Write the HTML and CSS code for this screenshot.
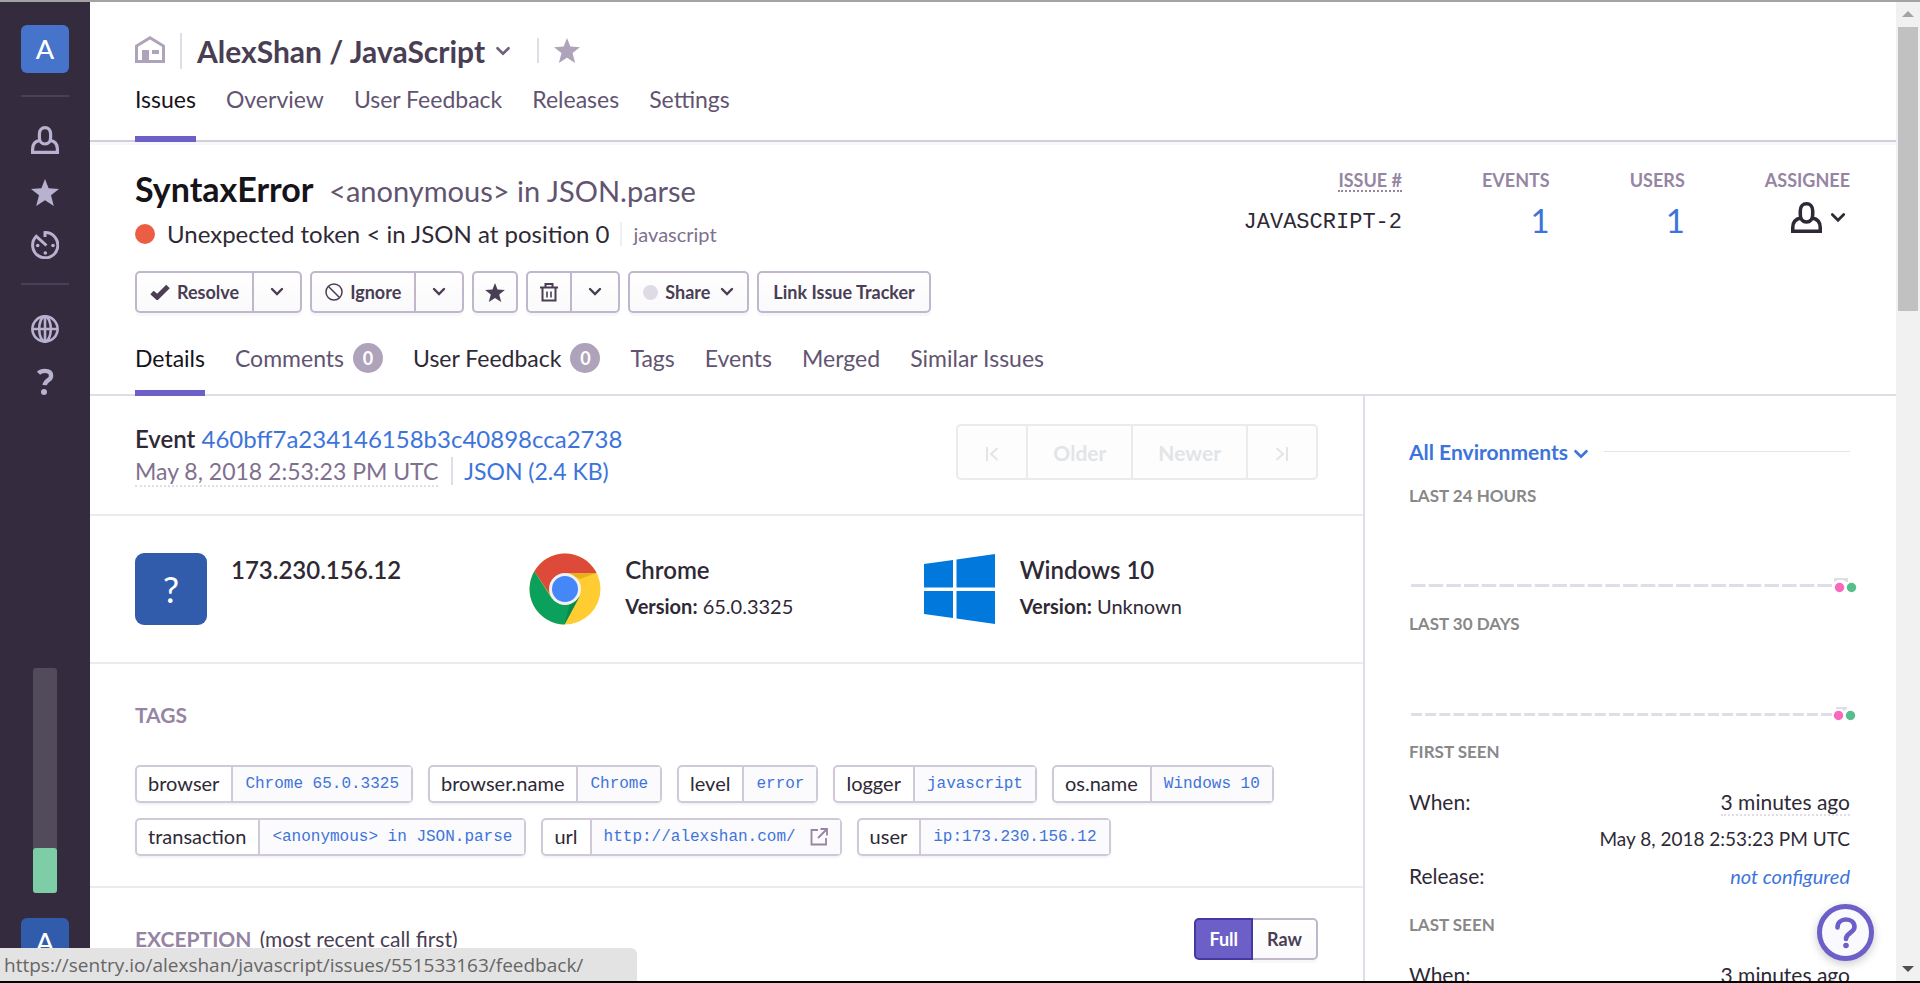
FILE: index.html
```html
<!DOCTYPE html>
<html lang="en">
<head>
<meta charset="utf-8">
<title>SyntaxError - AlexShan / JavaScript</title>
<link rel="stylesheet" href="styles.css">
</head>
<body>
<svg class="sprite" aria-hidden="true">
  <symbol id="chev" viewBox="0 0 14 10"><path d="M2 2l5 5 5-5" fill="none" stroke="currentColor" stroke-width="2.4" stroke-linecap="round"/></symbol>
  <symbol id="star" viewBox="0 0 28 27"><path d="M14 0l3.6 9.2L28 10l-8 6.3L22.8 27 14 21.2 5.2 27 8 16.300 0 10l10.400-.8z" fill="currentColor"/></symbol>
  <symbol id="user" viewBox="0 0 28 28"><path d="M8.400 8c0-4 2.300-6.400 5.600-6.400S19.600 4 19.600 8v3.500c0 4-2.300 6.500-5.600 6.500s-5.600-2.500-5.600-6.500zM8.800 14.400C4 15.300 1.600 18.500 1.600 23v3.400h24.800V23c0-4.500-2.400-7.700-7.200-8.600" fill="none" stroke="currentColor" stroke-width="3.200"/></symbol>
</svg>
<div class="app">
  <nav class="rail" aria-label="Organization">
    <div class="rail-group">
      <a class="avatar" href="#">A</a>
      <hr>
      <a href="#" aria-label="Assigned to me"><svg width="28" height="28"><use href="#user"/></svg></a>
      <a href="#" aria-label="Bookmarked"><svg width="28" height="27"><use href="#star"/></svg></a>
      <a href="#" aria-label="Recently viewed"><svg width="28" height="28" viewBox="0 0 28 28"><path d="M14 6V1.600A12.600 12.600 0 1 1 5.300 5.300L15.500 14.500" fill="none" stroke="currentColor" stroke-width="3"/><g fill="currentColor"><circle cx="6.700" cy="14.500" r="1.800"/><circle cx="22" cy="14.500" r="1.800"/><circle cx="14.300" cy="22" r="1.800"/></g></svg></a>
      <hr class="tight">
      <a href="#" aria-label="Status"><svg width="28" height="28" viewBox="0 0 28 28" fill="none" stroke="currentColor" stroke-width="2.600"><circle cx="14" cy="14" r="12.600"/><ellipse cx="14" cy="14" rx="5.800" ry="12.600"/><path d="M1.500 14h25M14 1.500v25"/></svg></a>
      <a href="#" aria-label="Help"><svg width="28" height="28" viewBox="0 0 28 28"><path d="M7.500 5.200C9 3.600 11.200 2.900 13.800 2.900c4 0 6.300 1.900 6.300 5 0 4.300-6.100 4.500-6.400 9.300" fill="none" stroke="currentColor" stroke-width="4.400"/><circle cx="13" cy="24" r="3" fill="currentColor"/></svg></a>
    </div>
    <div class="rail-group">
      <div class="meter"><div class="meter-fill"></div></div>
      <a class="avatar avatar-dark" href="#">A</a>
    </div>
  </nav>
  <main class="page">
    <header class="project">
      <div class="project-row">
        <a class="home" href="#" aria-label="Home"><svg width="30" height="27" viewBox="0 0 30 27"><path d="M1.500 25.500V10L15 1.800 28.500 10v15.500z" fill="none" stroke="currentColor" stroke-width="3"/><path d="M7 14h7v12H7zM17 14h7v4h-7z" fill="currentColor"/></svg></a>
        <h1>AlexShan / JavaScript</h1>
        <svg class="title-chev" width="16" height="11"><use href="#chev"/></svg>
        <a class="bookmark" href="#" aria-label="Bookmark project"><svg width="26" height="25"><use href="#star"/></svg></a>
      </div>
      <nav class="tabs">
        <a class="on" href="#">Issues</a><a href="#">Overview</a><a href="#">User Feedback</a><a href="#">Releases</a><a href="#">Settings</a>
      </nav>
    </header>
    <section class="issue">
      <div class="issue-top">
        <div>
          <h2>SyntaxError <span>&lt;anonymous&gt; in JSON.parse</span></h2>
          <p class="message"><i class="level"></i>Unexpected token &lt; in JSON at position 0 <a href="#">javascript</a></p>
        </div>
        <dl class="stats">
          <div><dt><abbr>ISSUE #</abbr></dt><dd class="short-id">JAVASCRIPT-2</dd></div>
          <div><dt>EVENTS</dt><dd><a href="#">1</a></dd></div>
          <div><dt>USERS</dt><dd><a href="#">1</a></dd></div>
          <div><dt>ASSIGNEE</dt><dd class="assignee"><svg width="31" height="31"><use href="#user"/></svg><svg width="16" height="12"><use href="#chev"/></svg></dd></div>
        </dl>
      </div>
      <div class="actions">
        <div class="btns"><button><svg width="20" height="16" viewBox="0 0 20 16"><path d="M2 8.500l5.200 4.700L18 2.500" fill="none" stroke="currentColor" stroke-width="5"/></svg>Resolve</button><button class="drop" aria-label="Resolve options"><svg width="14" height="10"><use href="#chev"/></svg></button></div>
        <div class="btns"><button><svg width="18" height="18" viewBox="0 0 18 18" fill="none" stroke="currentColor" stroke-width="1.500"><circle cx="9" cy="9" r="8"/><path d="M3.500 3.500l11 11"/></svg>Ignore</button><button class="drop" aria-label="Ignore options"><svg width="14" height="10"><use href="#chev"/></svg></button></div>
        <div class="btns"><button class="square" aria-label="Bookmark"><svg width="20" height="19"><use href="#star"/></svg></button></div>
        <div class="btns"><button class="square" aria-label="Delete"><svg width="18" height="19" viewBox="0 0 18 19" fill="none" stroke="currentColor"><path d="M0 4.500h18M5.500 4V1h7v3M2.500 5v12.500h13V5" stroke-width="2"/><path d="M7 8.500v6M11 8.500v6" stroke-width="1.600"/></svg></button><button class="drop" aria-label="Delete options"><svg width="14" height="10"><use href="#chev"/></svg></button></div>
        <div class="btns"><button class="share"><i></i>Share<svg width="14" height="10"><use href="#chev"/></svg></button></div>
        <div class="btns"><button class="wide">Link Issue Tracker</button></div>
      </div>
      <nav class="tabs">
        <a class="on" href="#">Details</a><a href="#">Comments<b>0</b></a><a class="hover" href="#">User Feedback<b>0</b></a><a href="#">Tags</a><a href="#">Events</a><a href="#">Merged</a><a href="#">Similar Issues</a>
      </nav>
    </section>
    <div class="columns">
      <div class="primary">
        <section class="event">
          <div class="event-id"><p><strong>Event</strong> <a href="#">460bff7a234146158b3c40898cca2738</a></p><p class="event-date"><time>May 8, 2018 2:53:23 PM UTC</time><a class="json" href="#">JSON (2.4 KB)</a></p></div>
          <div class="pager"><button disabled aria-label="Oldest"><svg width="14" height="14" viewBox="0 0 14 14" fill="none" stroke="currentColor" stroke-width="2"><path d="M2 0v14M12.500 1L6 7l6.500 6"/></svg></button><button disabled>Older</button><button disabled>Newer</button><button disabled aria-label="Newest"><svg width="14" height="14" viewBox="0 0 14 14" fill="none" stroke="currentColor" stroke-width="2"><path d="M12 0v14M1.500 1L8 7l-6.500 6"/></svg></button></div>
        </section>
        <section class="contexts">
          <div class="context"><div class="unknown">?</div><div><h3>173.230.156.12</h3></div></div>
          <div class="context">
            <svg width="72" height="72" viewBox="0 0 72 72"><circle cx="36" cy="36" r="35.500" fill="#ffcd32"/><path d="M5.300 18.200A35.500 35.500 0 0 1 66.700 18.200L67.500 20H36L22 43z" fill="#de4a3a"/><path d="M5.300 18.200A35.500 35.500 0 0 0 35.500 71.500L50.500 43.500 36 52 22 44z" fill="#0ba15d"/><path d="M36 20h31.500L51 26z" fill="#e8b01c"/><path d="M50.500 43.500L35.500 71.500 41 50z" fill="#078a4c"/><circle cx="36" cy="36" r="16" fill="#f1f1f1"/><circle cx="36" cy="36" r="13" fill="#4587f8"/></svg>
            <div><h3>Chrome</h3><p><strong>Version:</strong> 65.0.3325</p></div>
          </div>
          <div class="context">
            <svg width="72" height="72" viewBox="0 0 72 72" fill="#0078dc"><path d="M0 11l29-4v27.500H0zM32.500 6.500L71 1v33.500H32.500zM0 38h29v27L0 61zM32.500 38H71v33l-38.500-5.500z"/></svg>
            <div><h3>Windows 10</h3><p><strong>Version:</strong> Unknown</p></div>
          </div>
        </section>
        <section class="tags">
          <h4>TAGS</h4>
          <ul>
            <li><span>browser</span><a href="#">Chrome 65.0.3325</a></li>
            <li><span>browser.name</span><a href="#">Chrome</a></li>
            <li><span>level</span><a href="#">error</a></li>
            <li><span>logger</span><a href="#">javascript</a></li>
            <li><span>os.name</span><a href="#">Windows 10</a></li>
            <li><span>transaction</span><a href="#">&lt;anonymous&gt; in JSON.parse</a></li>
            <li><span>url</span><a href="#">http://alexshan.com/<svg width="18" height="18" viewBox="0 0 18 18" fill="none" stroke="currentColor" stroke-width="1.800"><path d="M8 2H1.500v14.500H16V10M10.500 1H17v6.500M16.500 1.500L8 10"/></svg></a></li>
            <li><span>user</span><a href="#">ip:173.230.156.12</a></li>
          </ul>
        </section>
        <section class="exception">
          <h4>EXCEPTION <small>(most recent call first)</small></h4>
          <div class="btns"><button class="active">Full</button><button class="wide">Raw</button></div>
        </section>
      </div>
      <aside class="secondary">
        <div class="env"><a href="#">All Environments <svg width="16" height="11"><use href="#chev"/></svg></a></div>
        <h5>LAST 24 HOURS</h5>
        <svg class="chart" viewBox="0 0 446 106"><path d="M2 78.500h421" stroke="#dfdee6" stroke-width="3" stroke-dasharray="14.600 3.070"/><path d="M425 71h14v4h-2l-3-2h-5l-4 2z" fill="#dfdee6"/><circle cx="430.500" cy="80.500" r="4.700" fill="#f868bc"/><circle cx="442.500" cy="80.500" r="4.700" fill="#57be8c"/></svg>
        <h5>LAST 30 DAYS</h5>
        <svg class="chart" viewBox="0 0 446 106"><path d="M2 79.500h421" stroke="#dfdee6" stroke-width="3" stroke-dasharray="11 3.140"/><path d="M427 72h11v2l-3 2-2-2h-6z" fill="#dfdee6"/><circle cx="429.500" cy="80.500" r="4.700" fill="#f868bc"/><circle cx="441.500" cy="80.500" r="4.700" fill="#57be8c"/></svg>
        <h5>FIRST SEEN</h5>
        <dl class="seen">
          <div><dt>When:</dt><dd><time>3 minutes ago</time></dd></div>
          <div class="date"><dd>May 8, 2018 2:53:23 PM UTC</dd></div>
          <div><dt>Release:</dt><dd><a href="#">not configured</a></dd></div>
        </dl>
        <h5>LAST SEEN</h5>
        <dl class="seen"><div><dt>When:</dt><dd><time>3 minutes ago</time></dd></div></dl>
      </aside>
    </div>
  </main>
  <div class="scroll" aria-hidden="true">
    <svg width="12" height="6" viewBox="0 0 12 6"><path d="M0 6l6-6 6 6z" fill="#a3a3a3"/></svg>
    <div class="thumb"></div>
    <svg width="12" height="6" viewBox="0 0 12 6"><path d="M0 0l6 6 6-6z" fill="#505050"/></svg>
  </div>
</div>
<button class="help" aria-label="Help"><svg width="24" height="32" viewBox="0 0 24 32"><path d="M3.500 10.500C3.500 5.500 7 2.500 12 2.500s8.500 3 8.500 7.500c0 6-8.500 5.500-8.500 12" fill="none" stroke="currentColor" stroke-width="4.600" stroke-linecap="round"/><circle cx="12" cy="28.500" r="2.800" fill="currentColor"/></svg></button>
<div class="status">https://sentry.io/alexshan/javascript/issues/551533163/feedback/</div>
</body>
</html>
```
FILE: styles.css
```css
* { box-sizing: border-box; }
body {
  margin: 0;
  height: 100vh;
  overflow: hidden;
  border-top: 2px solid #a3a3a3;
  border-bottom: 2px solid #000;
  background: #fff;
  color: #2f2936;
  font: 24px/30px Lato, "Noto Sans", sans-serif;
}
h1, h2, h3, h4, h5, p, dl, dd, ul { margin: 0; padding: 0; }
a { color: #3d74db; text-decoration: none; }
svg { flex: none; }
button { font-family: inherit; }
.sprite { position: absolute; width: 0; height: 0; }
.app { display: flex; height: 100%; }

/* left rail */
.rail {
  flex: none;
  width: 90px;
  padding: 23px 0 15px;
  background: #342c3e;
  display: flex;
  flex-direction: column;
  justify-content: space-between;
}
.rail-group { display: flex; flex-direction: column; align-items: center; gap: 25px; }
.rail a { display: flex; color: #b9b1d0; }
.rail hr { width: 48px; margin: -3px 0 4px; border: 0; border-top: 2px solid #493f59; }
.rail .tight { margin: -1px 0 5px; }
.rail .avatar {
  width: 48px;
  height: 48px;
  border-radius: 6px;
  background: #4674ca;
  color: #fff;
  font-size: 27px;
  font-weight: 500;
  align-items: center;
  justify-content: center;
}
.rail .avatar-dark { background: #315cac; }
.meter { width: 24px; height: 225px; border-radius: 3px; background: #524b5b; display: flex; align-items: flex-end; }
.meter-fill { width: 100%; height: 20%; border-radius: 3px; background: #7dcea6; }

/* project header */
.page { flex: 1; min-width: 0; overflow: hidden; }
.project { padding: 31px 45px 0; border-bottom: 2px solid #d5cddb; box-shadow: 0 3px 0 #f8f7f9; }
.project-row { display: flex; align-items: center; height: 36px; margin-bottom: 15px; }
.home { display: flex; color: #afa3bb; padding-bottom: 3px; }
h1 { margin-left: 15px; padding-left: 15px; border-left: 2px solid #dfdee6; font-size: 30px; line-height: 36px; font-weight: 700; color: #493e54; }
.title-chev { margin-left: 10px; color: #6f617c; }
.bookmark { display: flex; margin: 0 0 2px 26px; padding-left: 15px; border-left: 2px solid #dfdee6; color: #afa3bb; }
.tabs { display: flex; gap: 30px; margin-bottom: -2px; font-size: 23px; }
.tabs a { display: flex; align-items: center; padding-bottom: 22px; border-bottom: 6px solid transparent; color: #625471; }
.tabs .on { color: #161319; border-color: #6c5fc7; }
.tabs .hover { color: #2f2936; }
.tabs b { width: 30px; height: 30px; margin-left: 9px; border-radius: 50%; background: #afa3bb; color: #fff; font-size: 18px; text-align: center; }

/* issue header */
.issue { padding: 27px 46px 0 45px; border-bottom: 2px solid #dfdee6; }
.issue .tabs a { padding-bottom: 17px; }
.issue-top { display: flex; justify-content: space-between; }
h2 { font-size: 34px; line-height: 40px; font-weight: 700; color: #161319; }
h2 span { margin-left: 8px; font-size: 29px; font-weight: 400; color: #625471; }
.message { display: flex; align-items: center; margin-top: 8px; }
.level { width: 20px; height: 20px; margin-right: 12px; border-radius: 50%; background: #ec5e44; }
.message a { margin-left: 10px; padding-left: 12px; border-left: 2px solid #f0eef4; color: #80708f; font-size: 20px; line-height: 24px; }
.stats { display: flex; gap: 80px; text-align: right; font-size: 33px; line-height: 42px; }
.stats dt { font-size: 18px; line-height: 22px; font-weight: 700; color: #9585a3; }
.stats abbr { display: inline-block; line-height: 20px; border-bottom: 2px dotted #9585a3; }
.stats dd { margin-top: 8px; }
.stats .short-id { font: 22px/45px "Liberation Mono", monospace; }
.assignee { display: flex; gap: 8px; align-items: center; justify-content: flex-end; padding-right: 4px; line-height: 30px; }
.stats .assignee { margin-top: 11px; }
.actions { display: flex; gap: 8px; margin: 22px 0 30px; }
.btns { display: flex; }
.btns button {
  display: flex;
  align-items: center;
  gap: 7px;
  height: 42px;
  padding: 0 13px;
  border: 2px solid #c1b7cd;
  background: linear-gradient(#fff, #faf9fb);
  box-shadow: 0 3px 0 #f7f6f8;
  color: #493e54;
  font-size: 18px;
  font-weight: 700;
}
.btns button:first-child { border-radius: 5px 0 0 5px; }
.btns button:last-child { border-radius: 0 5px 5px 0; }
.btns button:only-child { border-radius: 5px; }
.btns button + button { margin-left: -2px; }
.btns .drop { padding: 0 16px; }
.btns .wide { padding: 0 14px; }
.btns .square { padding: 0; width: 46px; justify-content: center; }
.btns .active { position: relative; border-color: #4538a1; background: #6c5fc7; color: #fff; box-shadow: none; }
.share i { width: 15px; height: 15px; border-radius: 50%; background: #dfdbe5; }
.share svg { margin-left: 3px; }

/* event body */
.columns { display: flex; }
.primary { flex: 1; min-width: 0; border-right: 2px solid #dfdee6; }
.primary > section { padding-left: 45px; padding-right: 45px; border-bottom: 2px solid #ebeaf0; }
.event { display: flex; justify-content: space-between; align-items: center; padding-top: 26px; padding-bottom: 26px; line-height: 33px; }
.event strong { font-weight: 600; }
.event-date { font-size: 23px; }
.event time { color: #80708f; border-bottom: 2px dotted #dfdee6; }
.event .json { margin-left: 13px; padding-left: 11px; border-left: 2px solid #dfdee6; }
.pager { display: flex; margin-bottom: 6px; }
.pager button { height: 56px; padding: 0 25px; border: 2px solid #ebebee; background: #fdfdfd; color: #e2e5e8; font-size: 21px; font-weight: 700; }
.pager button:first-child, .pager button:last-child { padding: 0 27px; }
.pager button:first-child { border-radius: 5px 0 0 5px; }
.pager button:last-child { border-radius: 0 5px 5px 0; }
.pager button + button { margin-left: -2px; }
.contexts { display: grid; grid-template-columns: repeat(3, 1fr); padding-top: 37px; padding-bottom: 37px; }
.context { display: flex; gap: 24px; font-size: 20px; line-height: 24px; }
.context > div:last-child { padding-top: 2px; }
.context p { margin-top: 9px; }
.context p strong { font-weight: 700; }
h3 { font-size: 24px; line-height: 30px; font-weight: 600; }
.unknown { width: 72px; height: 72px; border-radius: 9px; background: #315cac; color: #fff; font-size: 36px; line-height: 72px; text-align: center; }
h4 { font-size: 21px; line-height: 24px; font-weight: 700; color: #9585a3; }
h4 small { margin-left: 3px; font-size: 21px; font-weight: 400; color: #493e54; }
.tags { padding-top: 39px; padding-bottom: 30px; }
.tags ul { display: flex; flex-wrap: wrap; gap: 15px; margin-top: 38px; list-style: none; }
.tags li { display: flex; height: 38px; border: 2px solid #d0c9d7; border-radius: 5px; box-shadow: 0 2px 2px #f4f2f6; font-size: 20px; line-height: 33px; }
.tags span { padding: 0 12px 0 11px; border-right: 2px solid #d0c9d7; }
.tags li a { display: flex; align-items: center; gap: 14px; padding: 0 12px; background: #fbfafc; font: 16px/34px "Liberation Mono", monospace; }
.tags li svg { color: #9585a3; }
.primary .exception { display: flex; justify-content: space-between; align-items: center; padding-top: 30px; padding-bottom: 30px; border: 0; }

/* right column */
.secondary { flex: none; width: 531px; padding: 42px 46px 0 44px; font-size: 21px; line-height: 28px; }
.env { display: flex; align-items: center; gap: 15px; margin-bottom: 20px; line-height: 27px; font-weight: 700; }
.env::after { content: ""; flex: 1; height: 1px; background: #e5e4ea; }
h5 { font-size: 17px; line-height: 22px; font-weight: 700; color: #888; }
.chart { display: block; width: 446px; height: 106px; overflow: visible; }
.seen { margin: 25px 0 24px; }
.seen div { display: flex; justify-content: space-between; margin-bottom: 11px; }
.seen .date { justify-content: flex-end; line-height: 24px; font-size: 19px; }
.seen time { border-bottom: 2px dotted #dfdee6; }
.seen a { font-size: 20px; font-style: italic; }

/* window chrome */
.scroll { flex: none; width: 24px; padding: 9px 0; background: #f1f1f1; display: flex; flex-direction: column; align-items: center; }
.thumb { width: 20px; height: 284px; margin: 10px 0 auto; background: #c1c1c1; }
.help {
  position: fixed;
  right: 46px;
  bottom: 22px;
  width: 57px;
  height: 57px;
  padding: 0;
  border: 5px solid #6c5fc7;
  border-radius: 50%;
  background: #faf9fd;
  color: #6c5fc7;
  display: grid;
  place-items: center;
  box-shadow: 0 3px 9px rgba(47, 41, 54, .25);
}
.status { position: fixed; left: 0; bottom: 2px; width: 637px; height: 33px; padding: 0 4px; border-top-right-radius: 6px; background: #e3e3e3; color: #666; font: 19px/34px "Open Sans", sans-serif; }
```
